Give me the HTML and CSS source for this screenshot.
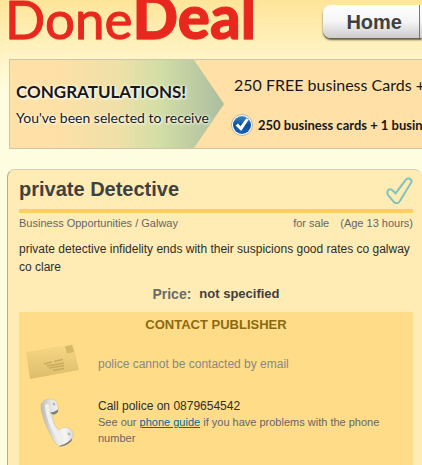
FILE: index.html
```
<!DOCTYPE html>
<html lang="en">
<head>
    <meta charset="utf-8">
    <title>private Detective - DoneDeal</title>
    <link rel="stylesheet" href="styles.css">
</head>
<body>
    <header class="header">
        <a class="logo" href="#">Done<b>Deal</b></a>
        <nav class="nav">
            <a href="#">Home</a>
            <a href="#" aria-label="More"></a>
        </nav>
    </header>

    <section class="banner">
        <div class="banner-intro">
            <h2>CONGRATULATIONS!</h2>
            <p>You've been selected to receive</p>
        </div>
        <div class="banner-offer">
            <p class="offer-title">250 FREE business Cards +</p>
            <p class="offer-item">
                <svg width="22" height="22" viewBox="0 0 22 22">
                    <defs>
                        <linearGradient id="blue" x1="0" y1="0" x2="0" y2="1">
                            <stop offset="0" stop-color="#3f86c4"/>
                            <stop offset="0.5" stop-color="#0b4f9c"/>
                            <stop offset="1" stop-color="#1763b4"/>
                        </linearGradient>
                    </defs>
                    <circle cx="11" cy="11" r="10.5" fill="#fff" stroke="#b9b3a2"/>
                    <circle cx="11" cy="11" r="9" fill="url(#blue)"/>
                    <path d="M4.500 11.500l2.500-2 2.500 2.800 5.800-8 2.500 1.200-7.600 11.500z" fill="#fff"/>
                </svg>
                <span>250 business cards + 1 business</span>
            </p>
        </div>
    </section>

    <main class="ad">
        <div class="ad-head">
            <h1>private Detective</h1>
            <svg width="28" height="28" viewBox="0 0 28 28">
                <path d="M2.500 14.500C3.500 11.500 6.500 12 8 13.800L10.600 16.400 20.500 3.200C22.500.2 27.500 1.500 26.400 5.200L15.200 23.600C13.500 26.800 10.500 27.200 8.600 24.600L3.200 18.200C2.300 17 2.100 15.800 2.500 14.500Z" fill="none" stroke="#80c2bd" stroke-width="2"/>
            </svg>
        </div>
        <div class="ad-meta">
            <span class="category">Business Opportunities / Galway</span>
            <span>for sale</span>
            <span>(Age 13 hours)</span>
        </div>
        <p class="description">private detective infidelity ends with their suspicions good rates co galway co clare</p>
        <p class="price"><span>Price:</span> <b>not specified</b></p>

        <section class="contact">
            <h3>CONTACT PUBLISHER</h3>
            <div class="contact-row">
                <svg width="54" height="36" viewBox="0 0 54 36">
                    <defs>
                        <linearGradient id="paper" x1="0" y1="0" x2="0" y2="1">
                            <stop offset="0" stop-color="#f8d884"/>
                            <stop offset="1" stop-color="#dbbd6c"/>
                        </linearGradient>
                    </defs>
                    <path d="M0 8L47 0 53 26 4 35Z" fill="url(#paper)"/>
                    <path d="M39 2.500l7-1.500 2 7-7 1.500z" fill="#d6b866"/>
                    <path d="M18 20l8-2M28 17.500l9-2M21 22l17-3M23 24l15-2.500M27 26.500l11-2" stroke="#c9ab5e" stroke-width="1.300"/>
                </svg>
                <p class="no-email">police cannot be contacted by email</p>
            </div>
            <div class="contact-row">
                <svg width="54" height="50" viewBox="0 0 54 50">
                    <defs>
                        <linearGradient id="handset" x1="0" y1="0.600" x2="1" y2="0.400">
                            <stop offset="0" stop-color="#b0afaa"/>
                            <stop offset="0.400" stop-color="#e6e6e4"/>
                            <stop offset="0.700" stop-color="#f6f6f5"/>
                            <stop offset="1" stop-color="#d2d2cf"/>
                        </linearGradient>
                    </defs>
                    <path d="M15 6C17 2 23 0 28 1.500L31 5 32.500 12C32 15 30 16.500 27 17 26 22 29 29 33 32 36 29 41 29 44 31 47 33 47.500 36 47 39L45 43C41 46 37 48.500 33 48.500 28 45 18 27 15 11Z" fill="url(#handset)" stroke="#c6b98f" stroke-width="0.500"/>
                    <path d="M24 14.500Q28 14.500 32 11.500L32 14Q29 16.900 26.500 16.500ZM34 47.500Q41 46 46 40L45.500 43Q41 48 33.500 48.500Z" fill="#807d75"/>
                    <path d="M21 8Q22 24 34 42" fill="none" stroke="#efefed" stroke-width="4" stroke-linecap="round"/>
                    <path d="M27 5l2 2M42 35l2 2" stroke="#b4b4b2" stroke-width="2"/>
                </svg>
                <div class="phone">
                    <p>Call police on 0879654542</p>
                    <p class="hint">See our <a href="#">phone guide</a> if you have problems with the phone number</p>
                </div>
            </div>
        </section>
    </main>
</body>
</html>
```
FILE: styles.css
```
* {
    margin: 0;
    padding: 0;
    box-sizing: border-box;
}

body {
    min-height: 100vh;
    overflow: hidden;
    display: flex;
    flex-direction: column;
    background: #fffddf linear-gradient(#ffe59a, #fffddf 90px) no-repeat;
    font-family: "Liberation Sans", Arial, sans-serif;
    font-size: 12px;
    line-height: 18px;
    color: #2e2e2e;
}

svg {
    flex: none;
}

/* Header */
.header {
    height: 59px;
    padding-left: 5px;
    display: flex;
    justify-content: space-between;
    align-items: flex-start;
}

.logo {
    margin-top: -16px;
    font-family: Lato, sans-serif;
    font-size: 53px;
    line-height: 64px;
    color: #e8281f;
    text-decoration: none;
    white-space: nowrap;
    -webkit-text-stroke: 1px #e8281f;
    text-shadow: 0 1px 1px #d8bd78;
}

.logo b {
    font-size: 60px;
    font-weight: 900;
}

.nav {
    margin-top: 5px;
    display: flex;
    border-radius: 8px 0 0 8px;
    background: linear-gradient(#fff, #f5f5f5 50%, #ccc);
    box-shadow: 0 2px 2px #625c49;
}

.nav a {
    height: 33px;
    padding: 0 17px 0 23px;
    font-size: 20px;
    font-weight: bold;
    line-height: 35px;
    color: #3f413f;
    text-decoration: none;
}

.nav a + a {
    width: 3px;
    padding: 0;
    border-left: 1px solid #777;
}

/* Banner */
.banner {
    height: 90px;
    margin-left: 9px;
    display: flex;
    border: 1px solid #d0c6a6;
    border-right: 0;
    background: #ffe0a6;
    font-family: Lato, sans-serif;
    color: #181818;
    white-space: nowrap;
    overflow: hidden;
}

.banner-intro {
    flex: none;
    width: 214px;
    padding: 19px 0 0 6px;
    background: linear-gradient(90deg, #ffe0a6 20%, #efe0a8 50%, #d2dea6 70%, #abbd9f);
    clip-path: polygon(0 0, 86% 0, 100% 50%, 86% 100%, 0 100%);
    text-shadow: 0 0 3px #fff, 1px 1px 3px #fff;
}

.banner-intro h2 {
    font-size: 17px;
    line-height: 26px;
}

.banner-intro p {
    font-size: 14px;
    line-height: 26px;
}

.banner-offer {
    padding: 12px 0 0 7px;
}

.offer-title {
    padding-left: 3px;
    font-size: 16px;
    line-height: 26px;
}

.offer-item {
    margin-top: 16px;
    display: flex;
    align-items: center;
    gap: 5px;
    font-size: 13px;
    font-weight: bold;
    line-height: 22px;
}

/* Ad */
.ad {
    flex: 1;
    margin: 20px 0 0 7px;
    padding: 7px 9px 0 11px;
    border: 1px solid #d6cfae;
    border-left-color: #b5ae8b;
    border-width: 1px 0 0 1px;
    border-radius: 8px 8px 0 0;
    background: #ffebb4;
    display: flex;
    flex-direction: column;
}

.ad-head {
    display: flex;
    justify-content: space-between;
    border-bottom: 4px solid #ffcf5d;
    padding-bottom: 4px;
}

.ad-head h1 {
    font-size: 20px;
    line-height: 24px;
    color: #3f413f;
}

.ad-meta {
    display: flex;
    gap: 11px;
    padding-top: 1px;
    font-size: 11px;
    color: #666;
}

.category {
    flex: 1;
}

.description {
    margin-top: 8px;
}

.price {
    margin-top: 9px;
    display: flex;
    justify-content: center;
    gap: 8px;
    font-size: 13px;
    color: #3f413f;
}

.price span {
    font-size: 14px;
    font-weight: bold;
    color: #6b6b6b;
}

/* Contact box */
.contact {
    flex: 1;
    margin-top: 9px;
    padding: 4px 7px 0;
    background: #ffdc87;
}

.contact h3 {
    font-size: 13px;
    line-height: 18px;
    text-align: center;
    color: #8a6a12;
}

.contact-row {
    display: flex;
    gap: 18px;
    margin-top: 10px;
}

.contact-row + .contact-row {
    margin-top: 18px;
}

.no-email {
    padding-top: 11px;
    color: #888;
}

.phone {
    line-height: 16px;
}

.hint {
    font-size: 11px;
    padding-right: 20px;
    color: #666;
}

.hint a {
    color: #06679c;
}
```
